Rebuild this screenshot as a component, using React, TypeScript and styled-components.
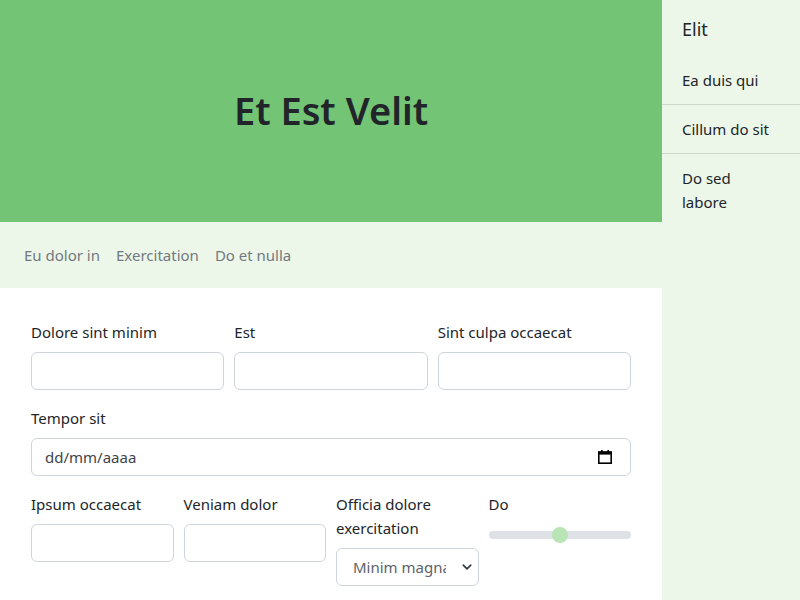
import React from "react";
import styled, { createGlobalStyle } from "styled-components";

const Global = createGlobalStyle`
  * { box-sizing: border-box; }
  html, body { margin: 0; padding: 0; }
  body {
    font-family: "Noto Sans", "Open Sans", sans-serif;
    font-size: 15px;
    line-height: 24px;
    color: #212529;
    background: #fff;
  }
`;

const Page = styled.div`
  display: flex;
  width: 800px;
  height: 600px;
  overflow: hidden;
`;

const Main = styled.div`
  flex: 0 0 662px;
  display: flex;
  flex-direction: column;
`;

const Hero = styled.header`
  flex: 0 0 222px;
  background: #74c476;
  display: flex;
  align-items: center;
  justify-content: center;
`;

const Title = styled.h1`
  margin: 0;
  font-size: 38px;
  font-weight: 600;
  line-height: 1.2;
  color: #212529;
`;

const Nav = styled.nav`
  flex: 0 0 66px;
  background: #edf7e9;
  display: flex;
  align-items: center;
  padding: 0 16px;
`;

const NavLink = styled.a`
  padding: 8px;
  color: #73797f;
  text-decoration: none;
`;

const Form = styled.form`
  flex: 0 0 auto;
  padding: 32px 31px;
  display: flex;
  flex-direction: column;
  gap: 16px;
`;

const Row = styled.div<{ $cols: number }>`
  display: grid;
  grid-template-columns: repeat(${(p) => p.$cols}, 1fr);
  gap: 10px;
  align-items: start;
`;

const Field = styled.div`
  display: flex;
  flex-direction: column;
  min-width: 0;
`;

const Label = styled.label`
  display: block;
  margin-bottom: 8px;
`;

const Input = styled.input`
  display: block;
  width: 100%;
  height: 38px;
  padding: 6px 13px;
  font: inherit;
  color: #212529;
  background: #fff;
  border: 1px solid #ced4da;
  border-radius: 6px;
  outline: none;
  &::placeholder { color: #3f4449; }
`;

const Overlay = styled.div`
  position: relative;
`;

const IconSlot = styled.span<{ $right: number }>`
  position: absolute;
  top: 50%;
  right: ${(p) => p.$right}px;
  transform: translateY(-50%);
  display: flex;
  pointer-events: none;
`;

const Select = styled.select`
  display: block;
  width: 100%;
  height: 38px;
  padding: 6px 32px 6px 16px;
  font: inherit;
  color: #5c636a;
  background: #fff;
  border: 1px solid #ced4da;
  border-radius: 6px;
  appearance: none;
  -webkit-appearance: none;
  outline: none;
`;

const Range = styled.input`
  -webkit-appearance: none;
  appearance: none;
  width: 100%;
  height: 16px;
  margin: 3px 0 0;
  background: transparent;
  &::-webkit-slider-runnable-track {
    height: 8px;
    background: #dee2e6;
    border-radius: 8px;
  }
  &::-webkit-slider-thumb {
    -webkit-appearance: none;
    width: 16px;
    height: 16px;
    margin-top: -4px;
    border-radius: 50%;
    border: none;
    background: #b9e4b6;
  }
`;

const Sidebar = styled.aside`
  flex: 1;
  background: #edf7e9;
  padding: 17px 0;
`;

const SideTitle = styled.div`
  font-size: 18px;
  line-height: 24px;
  padding: 0 20px;
  margin-bottom: 15px;
`;

const SideItem = styled.div`
  padding: 12px 30px 12px 20px;
  border-bottom: 1px solid rgba(0, 0, 0, 0.125);
  &:last-child { border-bottom: none; }
`;

const CalendarIcon = () => (
  <svg width="16" height="16" viewBox="0 0 16 16" fill="none">
    <rect x="1.8" y="3.2" width="12.4" height="11" stroke="#000" strokeWidth="1.6" />
    <rect x="1" y="2.4" width="14" height="3.2" fill="#000" />
    <rect x="4" y="1" width="1.6" height="2.5" fill="#000" />
    <rect x="10.4" y="1" width="1.6" height="2.5" fill="#000" />
  </svg>
);

const Chevron = () => (
  <svg width="10" height="10" viewBox="0 0 16 16" fill="none">
    <path d="M2 5l6 6 6-6" stroke="#343a40" strokeWidth="2.6" strokeLinecap="round" strokeLinejoin="round" />
  </svg>
);

export default function App() {
  return (
    <>
      <Global />
      <Page>
        <Main>
          <Hero>
            <Title>Et Est Velit</Title>
          </Hero>
          <Nav>
            <NavLink href="#">Eu dolor in</NavLink>
            <NavLink href="#">Exercitation</NavLink>
            <NavLink href="#">Do et nulla</NavLink>
          </Nav>
          <Form>
            <Row $cols={3}>
              <Field>
                <Label>Dolore sint minim</Label>
                <Input type="text" />
              </Field>
              <Field>
                <Label>Est</Label>
                <Input type="text" />
              </Field>
              <Field>
                <Label>Sint culpa occaecat</Label>
                <Input type="text" />
              </Field>
            </Row>
            <Row $cols={1}>
              <Field>
                <Label>Tempor sit</Label>
                <Overlay>
                  <Input type="text" placeholder="dd/mm/aaaa" />
                  <IconSlot $right={18}>
                    <CalendarIcon />
                  </IconSlot>
                </Overlay>
              </Field>
            </Row>
            <Row $cols={4}>
              <Field>
                <Label>Ipsum occaecat</Label>
                <Input type="text" />
              </Field>
              <Field>
                <Label>Veniam dolor</Label>
                <Input type="text" />
              </Field>
              <Field>
                <Label>Officia dolore exercitation</Label>
                <Overlay>
                  <Select defaultValue="a">
                    <option value="a">Minim magna</option>
                  </Select>
                  <IconSlot $right={7}>
                    <Chevron />
                  </IconSlot>
                </Overlay>
              </Field>
              <Field>
                <Label>Do</Label>
                <Range type="range" min={0} max={100} defaultValue={50} />
              </Field>
            </Row>
          </Form>
        </Main>
        <Sidebar>
          <SideTitle>Elit</SideTitle>
          <SideItem>Ea duis qui</SideItem>
          <SideItem>Cillum do sit</SideItem>
          <SideItem>Do sed labore</SideItem>
        </Sidebar>
      </Page>
    </>
  );
}
